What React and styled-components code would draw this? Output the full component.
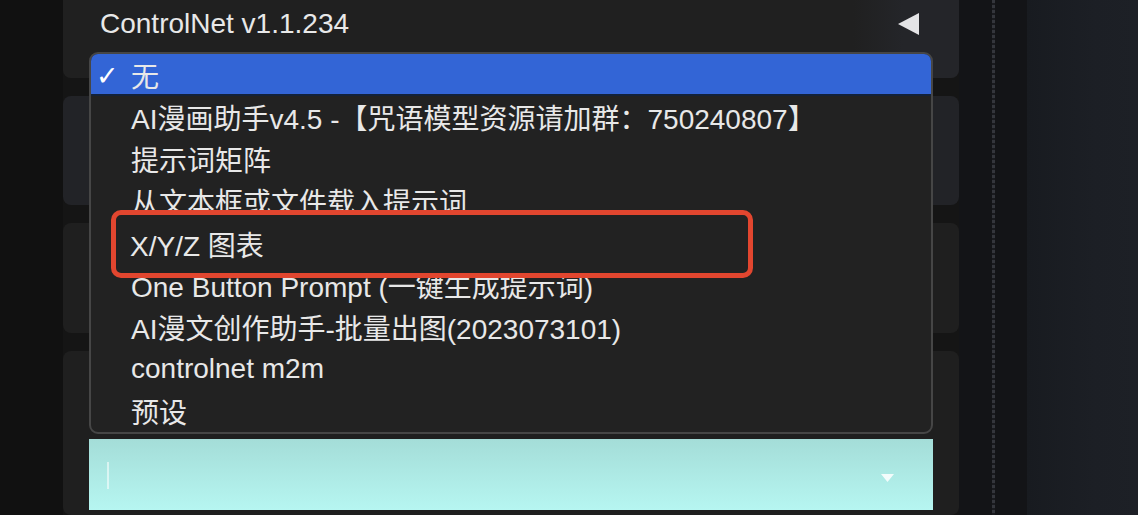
import React from "react";
import styled, { createGlobalStyle } from "styled-components";

const options = [
  "无",
  "AI漫画助手v4.5 -【咒语模型资源请加群：750240807】",
  "提示词矩阵",
  "从文本框或文件载入提示词",
  "X/Y/Z 图表",
  "One Button Prompt (一键生成提示词)",
  "AI漫文创作助手-批量出图(2023073101)",
  "controlnet m2m",
  "预设",
];

function App() {
  return (
    <>
      <GlobalStyle />
      <Screen>
        <Gutter />
        <Column>
          <Card height="78px" top tone="header">
            <Header>
              <span>ControlNet v1.1.234</span>
              <svg width="21" height="22" viewBox="0 0 21 22">
                <polygon points="21,0 21,22 0,11" fill="#e4e4e6" />
              </svg>
            </Header>
          </Card>
          <Card height="109px" tone="cool" />
          <Card height="110px" />
          <Card grow>
            <Field>
              <Caret />
              <svg width="13" height="8" viewBox="0 0 13 8">
                <polygon points="0,0 13,0 6.5,8" fill="rgba(255,255,255,0.85)" />
              </svg>
            </Field>
          </Card>
        </Column>
        <Rail>
          <Dashes />
        </Rail>
        <Backdrop />

        <Menu>
          {options.map((label, index) => (
            <Option key={index} selected={index === 0}>
              <Check>{index === 0 ? "✓" : ""}</Check>
              <span>{label}</span>
            </Option>
          ))}
        </Menu>

        <Callout>X/Y/Z 图表</Callout>
      </Screen>
    </>
  );
}

const GlobalStyle = createGlobalStyle`
  html, body {
    margin: 0;
    padding: 0;
    background: #111111;
  }
  body {
    font-family: "Liberation Sans", "Noto Sans CJK SC", Arial, sans-serif;
    color: #e6e6e6;
  }
`;

const Screen = styled.div`
  position: relative;
  display: flex;
  width: 1138px;
  height: 515px;
  overflow: hidden;
`;

const Gutter = styled.div`
  width: 63px;
  flex-shrink: 0;
  background: #111111;
`;

const Column = styled.div`
  width: 896px;
  flex-shrink: 0;
  display: flex;
  flex-direction: column;
  gap: 18px;
  background: #151515;
`;

const tones = {
  plain: "#1f1f1f",
  cool: "#222327",
  header: "linear-gradient(90deg, #202020 0, #202020 790px, #242529 840px)",
};

const Card = styled.div`
  height: ${(p) => (p.grow ? "auto" : p.height)};
  flex: ${(p) => (p.grow ? 1 : "none")};
  background: ${(p) => tones[p.tone || "plain"]};
  border-radius: ${(p) => (p.top ? "0 0 8px 8px" : "8px")};
  display: flex;
  flex-direction: column;
`;

const Header = styled.div`
  height: 48px;
  display: flex;
  align-items: center;
  justify-content: space-between;
  padding: 0 40px 0 37px;
  font-size: 28px;
  color: #e8e8e8;
`;

const Field = styled.div`
  position: relative;
  margin: 88px 0 0 26px;
  width: 844px;
  height: 71px;
  background: linear-gradient(180deg, #a4ddd8 0%, #b6f6f1 100%);
  display: flex;
  align-items: center;
  justify-content: flex-end;
  padding-right: 39px;
  box-sizing: border-box;

  svg {
    margin-top: 6px;
  }
`;

const Caret = styled.div`
  position: absolute;
  left: 18px;
  top: 23px;
  width: 2px;
  height: 27px;
  background: rgba(255, 255, 255, 0.55);
`;

const Rail = styled.div`
  width: 68px;
  flex-shrink: 0;
  background: #131417;
  display: flex;
  justify-content: center;
`;

const Dashes = styled.div`
  width: 3px;
  height: 100%;
  background: repeating-linear-gradient(
    180deg,
    #34363c 0,
    #34363c 3px,
    #1a1b1f 3px,
    #1a1b1f 5px
  );
`;

const Backdrop = styled.div`
  flex: 1;
  background: linear-gradient(90deg, #181b20 0%, #1c1f25 60%, #1d2026 100%);
`;

const Menu = styled.div`
  position: absolute;
  left: 89px;
  top: 52px;
  width: 844px;
  box-sizing: border-box;
  border: 2px solid #464646;
  border-radius: 9px;
  background: #222222;
  overflow: hidden;
  z-index: 2;
`;

const Option = styled.div`
  height: 42px;
  display: flex;
  align-items: center;
  font-size: 28px;
  white-space: nowrap;
  color: #e8e8e8;
  background: ${(p) => (p.selected ? "#3365d6" : "transparent")};
  box-shadow: ${(p) => (p.selected ? "inset 0 -2px 0 #13223a" : "none")};
`;

const Check = styled.span`
  width: 40px;
  flex-shrink: 0;
  padding-left: 5px;
  box-sizing: border-box;
  font-family: "DejaVu Sans", sans-serif;
  font-size: 27px;
  font-weight: bold;
  color: #ffffff;
`;

const Callout = styled.div`
  position: absolute;
  left: 111px;
  top: 210px;
  width: 642px;
  height: 68px;
  box-sizing: border-box;
  border: 5px solid #e2462f;
  border-radius: 10px;
  background: #222222;
  display: flex;
  align-items: center;
  padding: 0 0 0 14px;
  font-size: 28px;
  color: #e8e8e8;
  white-space: nowrap;
  z-index: 3;
`;

export default App;
